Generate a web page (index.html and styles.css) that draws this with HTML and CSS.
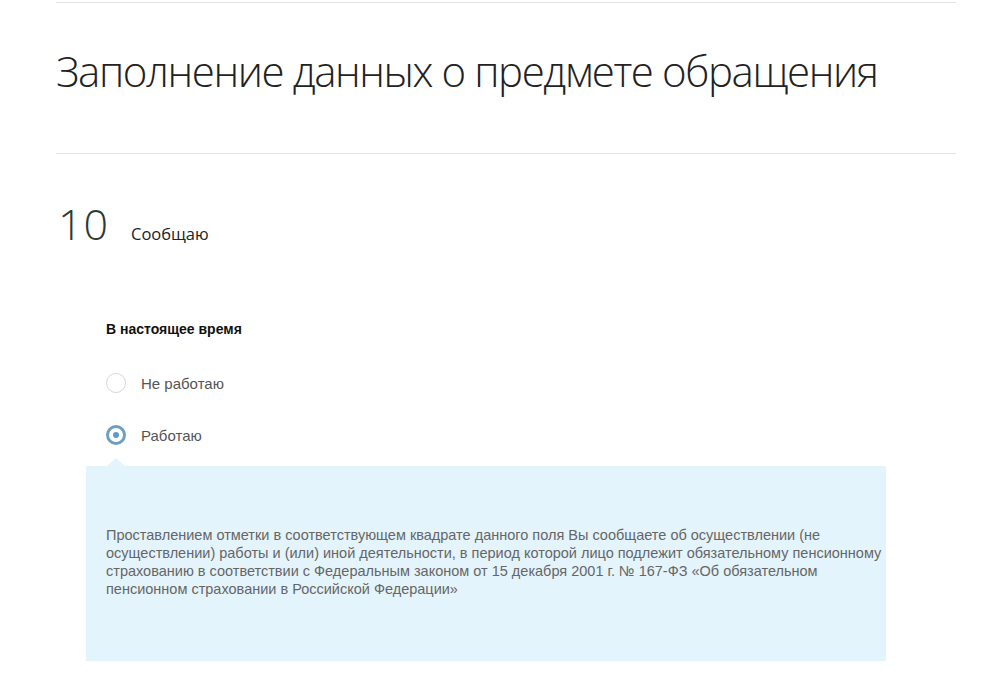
FILE: index.html
```html
<!DOCTYPE html>
<html lang="ru">
<head>
<meta charset="utf-8">
<title>Заполнение данных о предмете обращения</title>
<link rel="stylesheet" href="styles.css">
</head>
<body>
<div class="page">
  <div class="rule rule-top"></div>
  <h1 class="title">Заполнение данных о предмете обращения</h1>
  <div class="rule"></div>
  <div class="step">
    <span class="step-num">10</span>
    <span class="step-name">Сообщаю</span>
  </div>
  <div class="field">
    <div class="field-label">В настоящее время</div>
    <label class="radio">
      <span class="radio-mark"></span>
      <span class="radio-text">Не работаю</span>
    </label>
    <label class="radio radio-checked">
      <span class="radio-mark"></span>
      <span class="radio-text">Работаю</span>
    </label>
  </div>
  <div class="hint">
    <p class="hint-text">Проставлением отметки в соответствующем квадрате данного поля Вы сообщаете об осуществлении (не осуществлении) работы и (или) иной деятельности, в период которой лицо подлежит обязательному пенсионному страхованию в соответствии с Федеральным законом от 15 декабря 2001 г. № 167-ФЗ «Об обязательном пенсионном страховании в Российской Федерации»</p>
  </div>
</div>
</body>
</html>
```

FILE: styles.css
```css
html, body {
  margin: 0;
  padding: 0;
  background: #fff;
}
.page {
  width: 900px;
  margin-left: 56px;
  font-family: "Liberation Sans", Arial, sans-serif;
}
.rule {
  border-top: 1px solid #e3e3e3;
  height: 0;
}
.rule-top {
  margin-top: 2px;
}
.title {
  margin: 0;
  padding: 38px 0 53px 0;
  font-family: "Open Sans", sans-serif;
  font-weight: 300;
  font-size: 42px;
  line-height: 59px;
  color: #222;
  letter-spacing: -1.4px;
}
.step {
  display: flex;
  align-items: baseline;
  padding-top: 45px;
  height: 60px;
}
.step-num {
  font-family: "Open Sans", sans-serif;
  font-weight: 300;
  font-size: 43px;
  line-height: 50px;
  color: #2b3a33;
  width: 75px;
  padding-left: 2px;
  letter-spacing: 1px;
}
.step-name {
  font-family: "Open Sans", sans-serif;
  font-size: 16.5px;
  color: #222;
  margin-left: -2px;
}
.field {
  padding-left: 50px;
  padding-top: 61px;
}
.field-label {
  font-weight: bold;
  font-size: 14px;
  line-height: 18px;
  color: #111;
  margin-bottom: 35px;
}
.radio {
  display: flex;
  align-items: center;
  height: 20px;
  margin-bottom: 32px;
}
.radio-checked {
  margin-bottom: 0;
}
.radio-mark {
  box-sizing: border-box;
  width: 20px;
  height: 20px;
  border-radius: 50%;
  border: 1px solid #d6d6d6;
  background: #fff;
  margin-right: 15px;
  display: flex;
  align-items: center;
  justify-content: center;
}
.radio-checked .radio-mark {
  border: 3px solid #6d9fc0;
}
.radio-checked .radio-mark::after {
  content: "";
  width: 6px;
  height: 6px;
  border-radius: 50%;
  background: #5d9bcf;
}
.radio-text {
  font-size: 15px;
  color: #555;
}
.hint {
  position: relative;
  margin-left: 30px;
  margin-top: 21px;
  width: 800px;
  height: 195px;
  box-sizing: border-box;
  background: #e4f4fc;
  padding: 60px 0 0 20px;
}
.hint::before {
  content: "";
  position: absolute;
  left: 21px;
  top: -8px;
  border-left: 9px solid transparent;
  border-right: 9px solid transparent;
  border-bottom: 8px solid #e4f4fc;
}
.hint-text {
  margin: 0;
  font-size: 14.5px;
  line-height: 18px;
  color: #666;
}
```
